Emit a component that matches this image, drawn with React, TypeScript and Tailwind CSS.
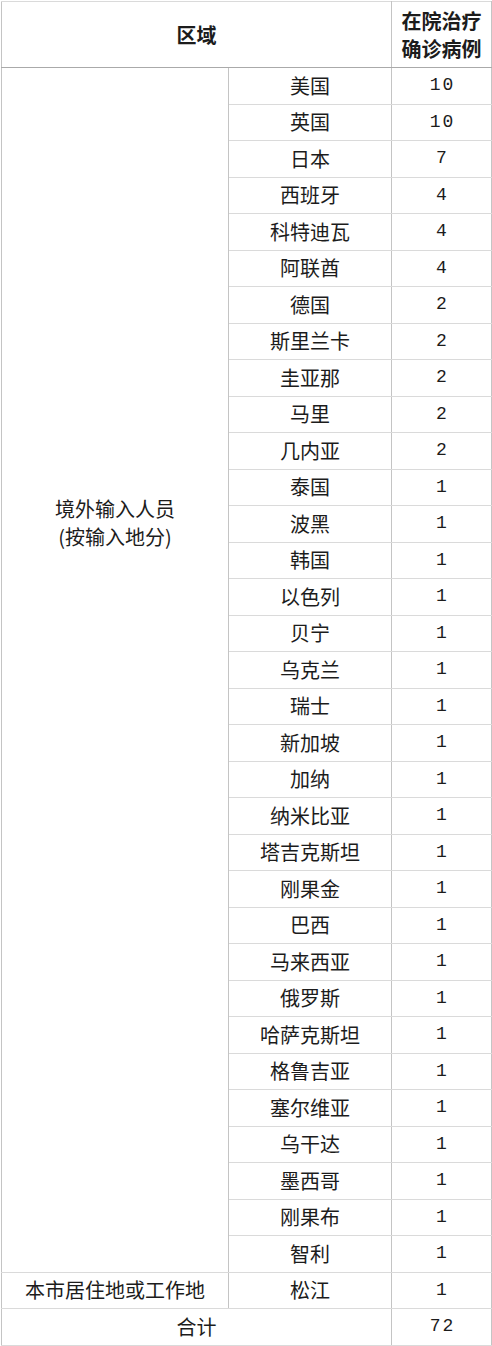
const abroad: [string, number][] = [
  ['美国', 10],
  ['英国', 10],
  ['日本', 7],
  ['西班牙', 4],
  ['科特迪瓦', 4],
  ['阿联酋', 4],
  ['德国', 2],
  ['斯里兰卡', 2],
  ['圭亚那', 2],
  ['马里', 2],
  ['几内亚', 2],
  ['泰国', 1],
  ['波黑', 1],
  ['韩国', 1],
  ['以色列', 1],
  ['贝宁', 1],
  ['乌克兰', 1],
  ['瑞士', 1],
  ['新加坡', 1],
  ['加纳', 1],
  ['纳米比亚', 1],
  ['塔吉克斯坦', 1],
  ['刚果金', 1],
  ['巴西', 1],
  ['马来西亚', 1],
  ['俄罗斯', 1],
  ['哈萨克斯坦', 1],
  ['格鲁吉亚', 1],
  ['塞尔维亚', 1],
  ['乌干达', 1],
  ['墨西哥', 1],
  ['刚果布', 1],
  ['智利', 1],
];

const cell = 'border border-x-[#c4c4c4] border-y-[#dadada] text-center p-0';
const num = "font-['Liberation_Mono',monospace] text-[18px] tracking-[2px] pl-[2px]";

export default function App() {
  return (
    <div className="min-h-[1346px] w-[492px] bg-white pl-px pt-px text-[#1c1c1c] font-['Noto_Sans_CJK_SC',sans-serif] text-[20px]">
      <table className="w-[490px] border-collapse table-fixed">
        <colgroup>
          <col className="w-[227px]" />
          <col className="w-[163px]" />
          <col className="w-[100px]" />
        </colgroup>
        <thead>
          <tr className="h-[66px]">
            <th colSpan={2} className={`${cell} border-b-[#aaaaaa] font-bold`}>
              区域
            </th>
            <th className={`${cell} border-b-[#aaaaaa] font-bold leading-[28px]`}>
              在院治疗
              <br />
              确诊病例
            </th>
          </tr>
        </thead>
        <tbody>
          {abroad.map(([name, count], i) => (
            <tr key={name} className="h-[36.5px]">
              {i === 0 && (
                <td
                  rowSpan={abroad.length}
                  className={`${cell} align-top pt-[427px] leading-[28px]`}
                >
                  境外输入人员
                  <br />
                  (按输入地分)
                </td>
              )}
              <td className={cell}>{name}</td>
              <td className={`${cell} ${num}`}>{count}</td>
            </tr>
          ))}
          <tr className="h-[36.5px]">
            <td className={cell}>本市居住地或工作地</td>
            <td className={cell}>松江</td>
            <td className={`${cell} ${num}`}>1</td>
          </tr>
          <tr className="h-[36.5px]">
            <td colSpan={2} className={cell}>
              合计
            </td>
            <td className={`${cell} ${num}`}>72</td>
          </tr>
        </tbody>
      </table>
    </div>
  );
}
